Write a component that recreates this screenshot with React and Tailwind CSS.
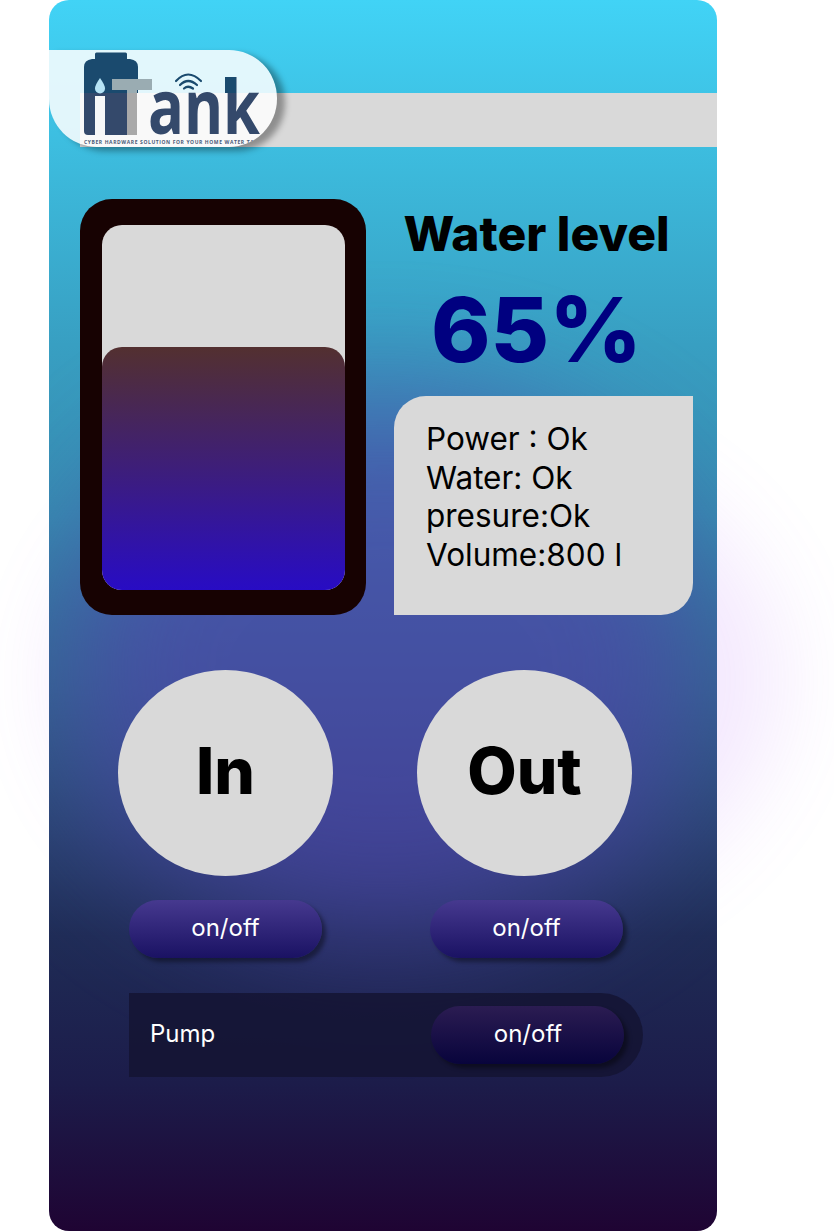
import React from 'react';

const font = { fontFamily: 'Inter, sans-serif' };

const Logo = () => (
  <svg width="200" height="97" viewBox="0 0 200 97" className="absolute left-[31px] top-0">
    {/* tank */}
    <path d="M15 4 q0-1.500 1.500-1.500 h29 q1.500 0 1.500 1.500 v5 h-32z" fill="#1a4a6e" />
    <path d="M12 9 h38 q8 1 8 8 v26 h-54 v-26 q0-7 8-8z" fill="#1a4a6e" />
    <path d="M4 43 h53 v42 h-49 q-4 0-4-4z" fill="#34496b" />
    <rect x="15" y="46" width="10" height="39" fill="#f7f7f7" />
    <path d="M20 28 q5 7 5 10.500 a5 5 0 0 1-10 0 q0-3.500 5-10.500z" fill="#b5e3f5" />
    {/* wifi */}
    <g fill="none" stroke="#1a4a6e" strokeWidth="2.200" strokeLinecap="round">
      <path d="M96 31 Q108 18 121 31" />
      <path d="M100 35 Q108 27 117 35" />
      <path d="M104 38.500 Q108 35 113 38.500" />
    </g>
    <text x="68" y="84" fontFamily="'Open Sans', sans-serif" fontWeight="700" fontSize="75" fill="#34496b" textLength="112" lengthAdjust="spacingAndGlyphs">ank</text>
    <rect x="145" y="27" width="11" height="16" fill="#1a4a6e" />
    <path d="M32 29 h40 v11 h-15 v3 h-10 v-3 h-15z" fill="#9aacb2" />
    <rect x="47" y="43" width="10" height="42" fill="#a9a9a9" />
    <text x="4" y="94" fontFamily="'Open Sans', sans-serif" fontWeight="700" fontSize="5" letterSpacing="0.600" fill="#4a5a78">CYBER HARDWARE SOLUTION FOR YOUR HOME WATER TA</text>
  </svg>
);

const Toggle = ({ dark }) => (
  <button
    className={`w-[193px] h-[58px] pb-[2px] rounded-[30px] text-white text-2xl shadow-[4px_4px_4px_rgba(0,0,0,0.4)] ${
      dark
        ? 'pl-[1px] bg-[linear-gradient(180deg,#2b1c52,#08043c)]'
        : 'bg-[linear-gradient(180deg,#46398f,#1a1263)]'
    }`}
  >
    on/off
  </button>
);

const RoundButton = ({ label }) => (
  <div className="w-[215px] h-[206px] pb-[4px] rounded-[50%] bg-[#d9d9d9] flex items-center justify-center text-black text-[64px] font-extrabold">
    {label}
  </div>
);

export default function App() {
  return (
    <div className="relative w-[834px] h-[1231px] overflow-hidden bg-white" style={font}>
      {/* glow behind the card */}
      <div className="absolute left-[60px] top-[425px] w-[720px] h-[510px] rounded-[50%] bg-[#b061f5] opacity-[0.14] blur-[45px]" />

      <div className="relative ml-[49px] w-[668px] h-[1231px] rounded-[20px] overflow-hidden bg-[linear-gradient(180deg,#41d3f6_0%,#3cb9db_14%,#389fc2_28%,#368bb0_42%,#30688f_56%,#28426f_68%,#1f2c56_76%,#1c1c4a_88%,#1f0433_100%)]">
        <div className="absolute left-[10px] top-[400px] w-[650px] h-[540px] rounded-[50%] bg-[#4d44a8] opacity-70 blur-[65px]" />

        <div className="relative flex flex-col">
          <div className="relative h-[147px] pt-[93px] pl-[31px]">
            <div className="h-[54px] bg-[#d9d9d9]" />
            <div className="absolute left-0 top-[50px] w-[228px] h-[97px] overflow-hidden rounded-r-[48px] rounded-bl-[48px] bg-white/85">
              <Logo />
            </div>
            <div className="absolute left-0 top-[50px] w-[228px] h-[97px] rounded-r-[48px] rounded-bl-[48px] shadow-[8px_4px_6px_rgba(0,0,0,0.35)] pointer-events-none" />
          </div>

          <div className="flex pt-[52px] pl-[31px]">
            <div className="w-[286px] h-[416px] rounded-[32px] bg-[#170202] pt-[26px] pl-[22px] pr-[21px] pb-[25px]">
              <div className="h-full rounded-[20px] bg-[#d9d9d9] flex flex-col justify-end">
                <div className="h-[243px] rounded-[20px] bg-[linear-gradient(180deg,#533030,#280cc4)]" />
              </div>
            </div>

            <div className="ml-[28px] w-[299px] flex flex-col">
              <div className="text-center whitespace-nowrap text-[48px] leading-[53px] font-extrabold text-black mr-[14px] pt-[8px]">Water level</div>
              <div className="text-center text-[90px] leading-[116px] font-extrabold text-[#000080] mr-[14px] pt-[12px]">65%</div>
              <div className="h-[219px] mt-[8px] rounded-tl-[32px] rounded-br-[32px] bg-[#d9d9d9] pt-[24px] pl-[32px] text-[31.5px] leading-[38.7px] text-black">
                <div>Power : Ok</div>
                <div>Water: Ok</div>
                <div>presure:Ok</div>
                <div>Volume:800 l</div>
              </div>
            </div>
          </div>

          <div className="flex pt-[55px] pl-[69px] gap-[84px]">
            <RoundButton label="In" />
            <RoundButton label="Out" />
          </div>

          <div className="flex pt-[24px] pl-[80px] gap-[108px]">
            <Toggle />
            <Toggle />
          </div>

          <div className="ml-[80px] mt-[35px] w-[514px] h-[84px] rounded-r-[42px] bg-[#141433]/85 flex items-center justify-between pl-[21px] pr-[19px]">
            <span className="text-white text-2xl pb-[2px]">Pump</span>
            <Toggle dark />
          </div>
        </div>
      </div>
    </div>
  );
}
